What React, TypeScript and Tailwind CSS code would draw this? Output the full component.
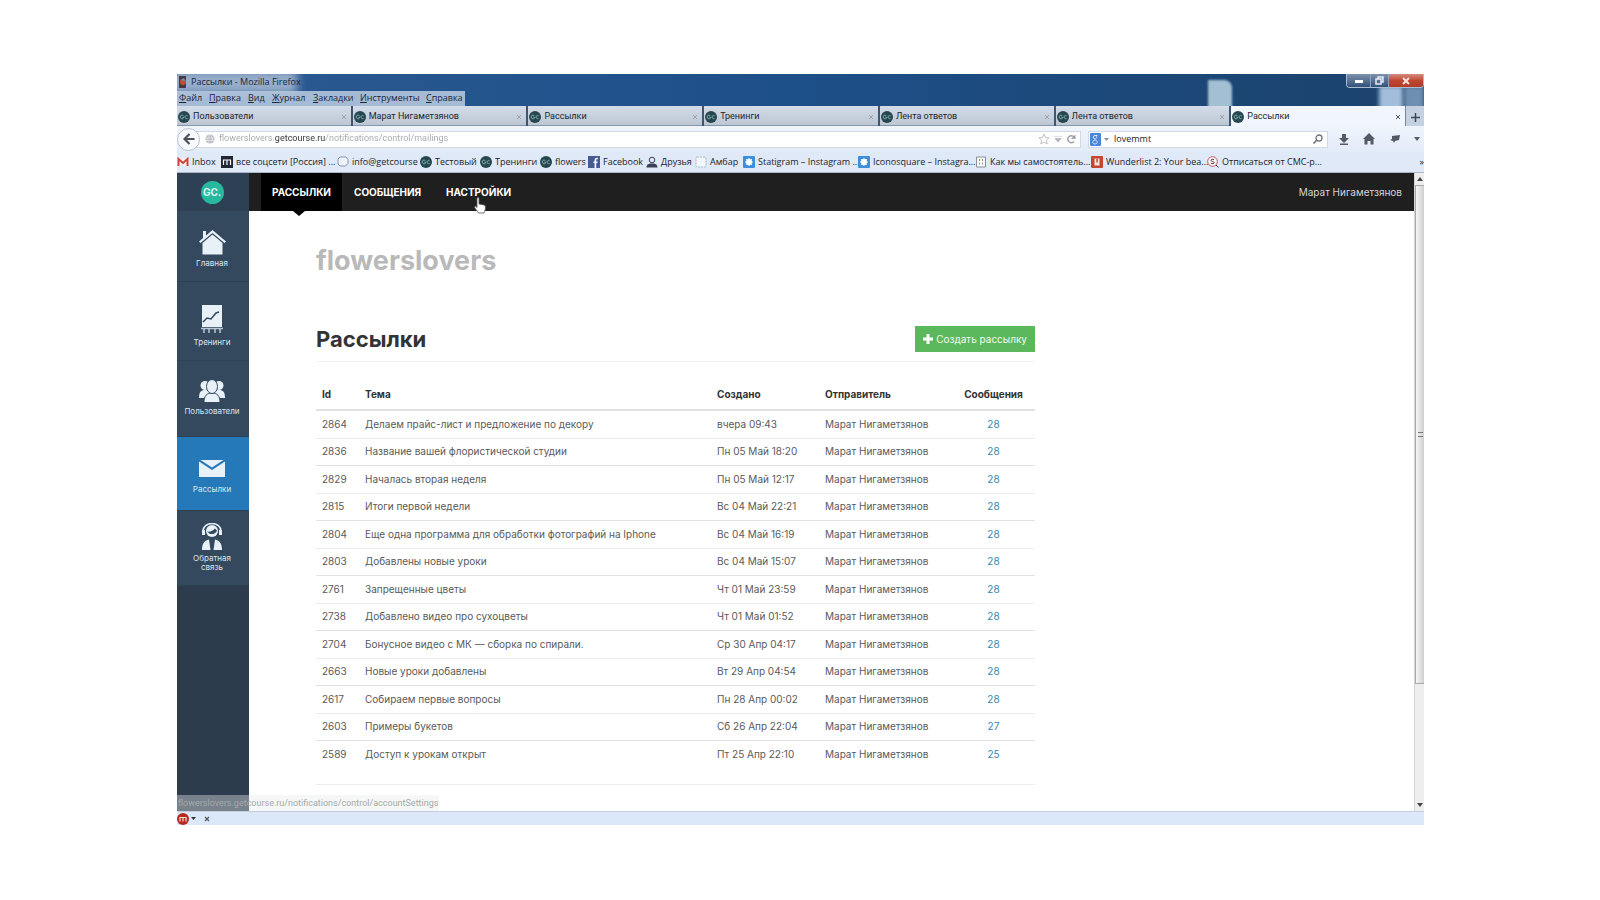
import type { ReactNode } from "react";
import clsx from "clsx";

const menuItems = [
  { label: "Файл", width: "w-[30px]" },
  { label: "Правка", width: "w-[39px]" },
  { label: "Вид", width: "w-6" },
  { label: "Журнал", width: "w-[41px]" },
  { label: "Закладки", width: "w-[47px]" },
  { label: "Инструменты", width: "w-[66px]" },
  { label: "Справка", width: "w-9" },
];

const tabs = [
  "Пользователи",
  "Марат Нигаметзянов",
  "Рассылки",
  "Тренинги",
  "Лента ответов",
  "Лента ответов",
  "Рассылки",
];

const mailings = [
  { id: 2864, subject: "Делаем прайс-лист и предложение по декору", created: "вчера 09:43", count: 28 },
  { id: 2836, subject: "Название вашей флористической студии", created: "Пн 05 Май 18:20", count: 28 },
  { id: 2829, subject: "Началась вторая неделя", created: "Пн 05 Май 12:17", count: 28 },
  { id: 2815, subject: "Итоги первой недели", created: "Вс 04 Май 22:21", count: 28 },
  { id: 2804, subject: "Еще одна программа для обработки фотографий на Iphone", created: "Вс 04 Май 16:19", count: 28 },
  { id: 2803, subject: "Добавлены новые уроки", created: "Вс 04 Май 15:07", count: 28 },
  { id: 2761, subject: "Запрещенные цветы", created: "Чт 01 Май 23:59", count: 28 },
  { id: 2738, subject: "Добавлено видео про сухоцветы", created: "Чт 01 Май 01:52", count: 28 },
  { id: 2704, subject: "Бонусное видео с МК — сборка по спирали.", created: "Ср 30 Апр 04:17", count: 28 },
  { id: 2663, subject: "Новые уроки добавлены", created: "Вт 29 Апр 04:54", count: 28 },
  { id: 2617, subject: "Собираем первые вопросы", created: "Пн 28 Апр 00:02", count: 28 },
  { id: 2603, subject: "Примеры букетов", created: "Сб 26 Апр 22:04", count: 27 },
  { id: 2589, subject: "Доступ к урокам открыт", created: "Пт 25 Апр 22:10", count: 25 },
];

function SiteIcon() {
  return (
    <svg viewBox="0 0 12 12" className="size-3 shrink-0">
      <circle cx="6" cy="6" r="6" fill="#25474f" />
      <path d="M5.4 4.6a1.9 1.9 0 1 0 .1 2.6V6.2H4.4M9.6 4.8a1.6 1.6 0 1 0 0 2.5" fill="none" stroke="#86a9ae" strokeWidth="1" />
    </svg>
  );
}

function SquareIcon() {
  return (
    <svg viewBox="0 0 12 12" className="size-3 shrink-0">
      <rect width="12" height="12" rx="1" fill="#3d8fdc" />
      <path d="M6 2l1.300 1.300L9 3l-.3 1.700L10 6 8.700 7.300 9 9l-1.700-.3L6 10 4.700 8.700 3 9l.3-1.700L2 6l1.300-1.300L3 3l1.700.3z" fill="#fff" />
    </svg>
  );
}

const bookmarks: { label: string; width: string; icon: ReactNode }[] = [
  {
    label: "Inbox",
    width: "w-11",
    icon: (
      <svg viewBox="0 0 12 12" className="size-3 shrink-0">
        <path d="M1 2h10v8H1z" fill="#f4f0f0" />
        <path d="M1.5 10V3L6 7l4.5-4v7" fill="none" stroke="#d0453a" strokeWidth="2" />
      </svg>
    ),
  },
  {
    label: "все соцсети [Россия] ...",
    width: "w-[116px]",
    icon: (
      <svg viewBox="0 0 12 12" className="size-3 shrink-0">
        <rect width="12" height="12" fill="#222733" />
        <path d="M2.5 9V4h7v5M6 4v5" fill="none" stroke="#fff" strokeWidth="1.2" />
      </svg>
    ),
  },
  {
    label: "info@getcourse",
    width: "w-[83px]",
    icon: (
      <svg viewBox="0 0 12 12" className="size-3 shrink-0">
        <path d="M3 1h6l2 2.5v4L8.500 10H3L1 8V3z" fill="#eef3fb" stroke="#8795ae" />
      </svg>
    ),
  },
  { label: "Тестовый", width: "w-[60px]", icon: <SiteIcon /> },
  { label: "Тренинги", width: "w-[60px]", icon: <SiteIcon /> },
  { label: "flowers", width: "w-12", icon: <SiteIcon /> },
  {
    label: "Facebook",
    width: "w-[58px]",
    icon: (
      <svg viewBox="0 0 12 12" className="size-3 shrink-0">
        <rect width="12" height="12" fill="#465a94" />
        <path d="M9.800 2.500H9c-1.200 0-1.600.6-1.600 1.600V12M5.500 6.300h4" fill="none" stroke="#fff" strokeWidth="1.600" />
      </svg>
    ),
  },
  {
    label: "Друзья",
    width: "w-[49px]",
    icon: (
      <svg viewBox="0 0 12 12" className="size-3 shrink-0">
        <circle cx="6" cy="4" r="2.800" fill="#dfe6f2" stroke="#3a4056" />
        <path d="M.5 11.500c0-3 2-3.500 3.500-4h4c1.500.5 3.500 1 3.500 4z" fill="#3a4056" />
      </svg>
    ),
  },
  {
    label: "Амбар",
    width: "w-12",
    icon: (
      <svg viewBox="0 0 12 12" className="size-3 shrink-0">
        <rect x="1" y="1" width="10" height="10" rx="1" fill="#f2f6fc" stroke="#a9b5c8" strokeDasharray="2 1" />
      </svg>
    ),
  },
  { label: "Statigram – Instagram ...", width: "w-[115px]", icon: <SquareIcon /> },
  { label: "Iconosquare – Instagra...", width: "w-[117px]", icon: <SquareIcon /> },
  {
    label: "Как мы самостоятель...",
    width: "w-[116px]",
    icon: (
      <svg viewBox="0 0 12 12" className="size-3 shrink-0">
        <path d="M1.500 1h9v10h-9z" fill="#f6f7f5" stroke="#8a9296" />
        <path d="M4.500 3v6M7.500 3v6" stroke="#8a9c92" strokeDasharray="2 1.500" />
      </svg>
    ),
  },
  {
    label: "Wunderlist 2: Your bea...",
    width: "w-[116px]",
    icon: (
      <svg viewBox="0 0 12 12" className="size-3 shrink-0">
        <rect width="12" height="12" rx="1" fill="#c8452f" />
        <path d="M3.500 2.500h5v7h-5z" fill="#f8e4dc" />
        <path d="M6 2.500v4" stroke="#c8452f" strokeWidth="1.500" />
      </svg>
    ),
  },
  {
    label: "Отписаться от СМС-р...",
    width: "w-[130px]",
    icon: (
      <svg viewBox="0 0 12 12" className="size-3 shrink-0">
        <circle cx="5.500" cy="5.500" r="4.800" fill="#fff" stroke="#c4505a" />
        <path d="M7 3.800c-1-.8-3-.6-3 .6 0 1.400 3.200.8 3.200 2.300 0 1.200-2.300 1.300-3.300.4M9 9l2.500 2.500" fill="none" stroke="#5b2c33" />
      </svg>
    ),
  },
];

const sections = [
  {
    label: "Главная",
    className: "h-[71px] gap-1 pt-[18px]",
    icon: (
      <svg viewBox="0 0 27 26" className="h-[26px] w-[27px]" fill="#e8f1f8">
        <path d="M4 2h3v5l-3 3z" />
        <path d="M13.500 1L0 12.500l1.500 1.600L13.500 4l12 10.100 1.500-1.600z" />
        <path d="M13.500 5.500L3.500 14v11.500h20V14z" />
      </svg>
    ),
  },
  {
    label: "Тренинги",
    className: "h-[79px] gap-1 pt-[23px]",
    icon: (
      <svg viewBox="0 0 22 29" className="h-[29px] w-[22px]">
        <path d="M1 0h20v22H1z" fill="#e8f1f8" />
        <path d="M2 17l4-4 4 1 5-6 3-1" fill="none" stroke="#34495e" strokeWidth="1.500" />
        <path d="M0 23.500h22M3 24v4M8 24v4M14 24v4M19 24v4" stroke="#b9c8d6" strokeWidth="1.500" />
      </svg>
    ),
  },
  {
    label: "Пользователи",
    className: "h-[76px] gap-1 pt-[18px]",
    icon: (
      <svg viewBox="0 0 26 24" className="h-6 w-[26px]" fill="#e8f1f8">
        <circle cx="6" cy="6.500" r="4.500" />
        <circle cx="20" cy="6.500" r="4.500" />
        <path d="M0 19c0-6 2-8 6-8h14c4 0 6 2 6 8z" />
        <path d="M5 23.500c0-7 3-9.500 8-9.500s8 2.500 8 9.500z" stroke="#34495e" />
        <ellipse cx="13" cy="7.500" rx="5.500" ry="7" stroke="#34495e" />
      </svg>
    ),
  },
  {
    label: "Рассылки",
    className: "h-[74px] gap-2 bg-[#2679b8] pt-[23px]",
    icon: (
      <svg viewBox="0 0 26 17" className="h-[17px] w-[26px]" fill="#e8f1f8">
        <path d="M0 1.500l13 8.500 13-8.500V17H0z" />
        <path d="M1.500 0h23L13 7.500z" />
      </svg>
    ),
  },
  {
    label: "Обратная связь",
    className: "h-[75px] gap-1 pt-3",
    icon: (
      <svg viewBox="0 0 22 27" className="h-[27px] w-[22px]">
        <circle cx="11" cy="8" r="6" fill="#e8f1f8" />
        <path d="M2 10V8a9 7.500 0 0 1 18 0v2" fill="none" stroke="#e8f1f8" strokeWidth="1.500" />
        <path d="M1 7h3v5H1zM18 7h3v5h-3z" fill="#e8f1f8" />
        <path d="M6 8.500c3 .5 6-.5 8-3l2 2c-1 3-4 4-7 3.500z" fill="#34495e" />
        <path d="M1 27c0-6 2-9.500 7-10.500L9.500 27zM21 27c0-6-2-9.500-7-10.500L12.500 27z" fill="#e8f1f8" />
      </svg>
    ),
  },
];

function TitleBar() {
  return (
    <header className="relative overflow-hidden bg-linear-to-r from-[#2c5a92] via-[#1d4f88] to-[#1b426c]">
      {/* desktop showing through the glass frame */}
      <div className="absolute inset-0" aria-hidden="true">
        <span className="absolute -top-1 -left-2 h-6 w-32 bg-[#b4c4da]/80 blur-[5px]" />
        <span className="absolute top-1.5 right-[192px] h-8 w-6 rounded-tr-lg bg-[#a3bfd2] blur-[1px]" />
        <span className="absolute top-3 right-[21px] h-8 w-6 bg-[#a3bedb] blur-[2px]" />
        <span className="absolute top-3 right-0 h-8 w-5 bg-[#6f8fb0] blur-[2px]" />
      </div>
      <div className="relative flex h-[17px] items-start justify-between">
        <div className="flex items-center gap-1 pl-0.5 text-[9px] leading-4 text-[#16263c]">
          <svg viewBox="0 0 8 12" className="h-3 w-2">
            <path d="M0 0h7v12H0z" fill="#473a45" />
            <circle cx="4" cy="6" r="3" fill="#c64c2c" />
            <path d="M2 4l3-2 1 3z" fill="#55a0d0" />
          </svg>
          Рассылки - Mozilla Firefox
        </div>
        <div className="flex h-3.5 overflow-hidden rounded-b border border-t-0 border-[#aabdd0]">
          <button aria-label="Свернуть" className="flex w-6 items-end justify-center border-r border-[#91a6bd] bg-linear-to-b from-[#7e93ab] to-[#33527a] pb-1">
            <span className="h-[3px] w-2 bg-white" />
          </button>
          <button aria-label="Восстановить" className="flex w-[18px] items-center justify-center border-r border-[#91a6bd] bg-linear-to-b from-[#7e93ab] to-[#33527a]">
            <svg viewBox="0 0 9 9" className="size-[9px]" fill="none" stroke="#e5edf5" strokeWidth="1.500">
              <path d="M1 3h5v5H1zM3 2.500V1h5v5H6.500" />
            </svg>
          </button>
          <button aria-label="Закрыть" className="flex w-[34px] items-center justify-center bg-linear-to-b from-[#d58c7f] via-[#c04632] to-[#b23a26]">
            <svg viewBox="0 0 8 8" className="size-2">
              <path d="M1 1l6 6M7 1L1 7" stroke="#f5e4e0" strokeWidth="2" />
            </svg>
          </button>
        </div>
      </div>
      <nav className="relative flex h-[15px] w-72 items-start bg-[#b3c5dd]/90 pl-0.5 text-[9px] leading-[14px] text-[#1c2636]">
        {menuItems.map((item) => (
          <button key={item.label} className={clsx("shrink-0 text-left whitespace-nowrap", item.width)}>
            <span className="underline">{item.label[0]}</span>
            {item.label.slice(1)}
          </button>
        ))}
      </nav>
    </header>
  );
}

function TabStrip() {
  return (
    <div className="flex h-5 bg-[#bccbdd] font-['Roboto','Open_Sans',sans-serif] text-[9px] text-[#20262e]">
      {tabs.map((tab, i) => {
        const active = i === tabs.length - 1;
        return (
          <div
            key={i}
            className={clsx(
              "flex min-w-0 flex-1 items-center gap-[3px] border-r pt-0.5 pr-1 pl-px",
              active
                ? "border-[#76879b] bg-[#f1f6fd]"
                : "border-r-2 border-r-[#3f5570] bg-linear-to-b from-[#d3dce8] to-[#bcc6d3] shadow-[inset_0_-1px_#8797aa]"
            )}
          >
            <SiteIcon />
            <button className="flex-1 truncate text-left">{tab}</button>
            <button aria-label="Закрыть вкладку" className={active ? "text-[#4c5460]" : "text-[#9aa5b3]"}>
              <svg viewBox="0 0 6 6" className="size-1.5">
                <path d="M1 1l4 4M5 1L1 5" stroke="currentColor" />
              </svg>
            </button>
          </div>
        );
      })}
      <button aria-label="Новая вкладка" className="flex w-[18px] items-center justify-center bg-[#c5d1e0] pt-0.5">
        <svg viewBox="0 0 9 9" className="size-[9px]">
          <path d="M4.500 0v9M0 4.500h9" stroke="#3c4654" strokeWidth="1.500" />
        </svg>
      </button>
    </div>
  );
}

function Toolbar() {
  return (
    <div className="flex h-[26px] items-center bg-linear-to-b from-[#f0f5fc] to-[#e2ebf8]">
      <button aria-label="Назад" className="relative z-10 flex size-[23px] shrink-0 items-center justify-center rounded-full border border-[#b8c3d1] bg-[#f8fafd]">
        <svg viewBox="0 0 12 12" className="size-3">
          <path d="M6.500 1L1.500 6l5 5M2 6h9.500" fill="none" stroke="#4a525e" strokeWidth="2.200" />
        </svg>
      </button>
      <div className="-ml-1 flex h-[17px] flex-1 items-center gap-1 border border-[#d0d9e5] bg-white pr-1 pl-2">
        <svg viewBox="0 0 10 10" className="size-2.5 shrink-0">
          <circle cx="5" cy="5" r="4.500" fill="#b7babf" />
          <path d="M1 4h8M1 6.500h8M5 .5c-3 3-3 6 0 9M5 .5c3 3 3 6 0 9" fill="none" stroke="#f0f1f3" strokeWidth=".7" />
        </svg>
        <input
          aria-label="Адрес"
          defaultValue="flowerslovers.getcourse.ru/notifications/control/mailings"
          className="min-w-0 flex-1 bg-[linear-gradient(90deg,#a4a7ab_55px,#2f3338_55px,#2f3338_106px,#a4a7ab_106px)] bg-clip-text font-['Roboto','Open_Sans',sans-serif] text-[9px] text-transparent outline-none"
        />
        <button aria-label="В закладки">
          <svg viewBox="0 0 12 12" className="size-3">
            <path d="M6 1l1.500 3.500 3.500.3-2.700 2.400.9 3.800L6 9l-3.200 2 .9-3.800L1 4.800l3.500-.3z" fill="none" stroke="#bdc1c6" />
          </svg>
        </button>
        <button aria-label="История">
          <svg viewBox="0 0 8 6" className="h-1.5 w-2">
            <path d="M0 0h8M1 2.500h6L4 6z" fill="#b2b6bb" stroke="#b2b6bb" strokeWidth=".8" />
          </svg>
        </button>
        <button aria-label="Обновить">
          <svg viewBox="0 0 10 10" className="size-2.5">
            <path d="M8 7.500A3.500 3.500 0 1 1 8 3" fill="none" stroke="#9da1a7" strokeWidth="1.500" />
            <path d="M9.500.5V5H5z" fill="#9da1a7" />
          </svg>
        </button>
      </div>
      <div className="ml-[7px] flex h-[17px] w-60 items-center border border-[#d0d9e5] bg-white pr-1 pl-px">
        <svg viewBox="0 0 11 13" className="h-[13px] w-[11px]">
          <rect width="11" height="13" rx="1" fill="#4a86dc" />
          <path d="M7.500 2.500H5a1.500 1.500 0 0 0 0 3.500c2 0 2-3.500 0-3.500M5 7c3 0 3 4 0 4s-3-3.500 0-4z" fill="none" stroke="#d8e7fb" />
        </svg>
        <svg viewBox="0 0 5 3" className="mx-[3px] h-[3px] w-[5px]">
          <path d="M0 0h5L2.500 3z" fill="#8b9097" />
        </svg>
        <input aria-label="Поиск" defaultValue="lovemmt" className="ml-0.5 min-w-0 flex-1 text-[9px] text-[#22262c] outline-none" />
        <button aria-label="Найти">
          <svg viewBox="0 0 10 10" className="size-2.5">
            <circle cx="6" cy="4" r="3" fill="none" stroke="#6f747b" strokeWidth="1.300" />
            <path d="M4 6L.5 9.500" stroke="#6f747b" strokeWidth="1.600" />
          </svg>
        </button>
      </div>
      <div className="flex w-24 items-center justify-between pr-1 pl-2.5 text-[#525a66]">
        <button aria-label="Загрузки">
          <svg viewBox="0 0 12 12" className="size-3" fill="currentColor">
            <path d="M4 1h4v4h3l-5 5-5-5h3zM2 10.500h8V12H2z" />
          </svg>
        </button>
        <button aria-label="Домой">
          <svg viewBox="0 0 12 12" className="size-3" fill="currentColor">
            <path d="M6 0l6 6h-1.500v5.500h-3V8h-3v3.500h-3V6H0z" />
          </svg>
        </button>
        <button aria-label="Дополнение">
          <svg viewBox="0 0 12 12" className="size-3" fill="currentColor">
            <path d="M3 3l8-1-1 5-4 1-1 2-1-2-3-1 2-1z" />
          </svg>
        </button>
        <button aria-label="Ещё">
          <svg viewBox="0 0 6 4" className="h-1 w-1.5" fill="currentColor">
            <path d="M0 0h6L3 4z" />
          </svg>
        </button>
      </div>
    </div>
  );
}

function BookmarksBar() {
  return (
    <div className="flex h-[21px] items-center border-b border-[#a9b7c9] bg-[#dfe9f7] text-[9px] text-[#1d222a]">
      {bookmarks.map((item) => (
        <a key={item.label} href="#" className={clsx("flex shrink-0 items-center gap-[3px] whitespace-nowrap", item.width)}>
          {item.icon}
          {item.label}
        </a>
      ))}
      <button aria-label="Показать другие закладки" className="ml-auto">
        »
      </button>
    </div>
  );
}

function Sidebar() {
  return (
    <aside className="flex w-[72px] shrink-0 flex-col bg-[#2c3c4d]">
      <a href="#" className="flex h-[38px] items-center justify-center bg-[#2e4054] pr-0.5">
        <span className="flex size-[23px] items-center justify-center rounded-full bg-[#27b99f] text-[10px] font-bold text-[#dff5f0]">
          GC.
        </span>
      </a>
      {sections.map((section) => (
        <a
          key={section.label}
          href="#"
          className={clsx(
            "flex flex-col items-center border-b border-[#2d4155] pr-0.5 text-center text-[8px] leading-[9px] text-[#dbe5ee]",
            section.className,
            section.label !== "Рассылки" && "bg-[#34495e]"
          )}
        >
          {section.icon}
          <span className={section.label === "Обратная связь" ? "w-12" : "whitespace-nowrap"}>{section.label}</span>
        </a>
      ))}
    </aside>
  );
}

function TopNav() {
  return (
    <nav className="flex h-[38px] items-center bg-[#1f1f1f] pl-3 text-[10px] font-bold text-white">
      <a href="#" className="relative flex h-full w-[81px] items-center justify-center bg-black">
        РАССЫЛКИ
        <span className="absolute top-full left-8 border-x-[6px] border-t-[5px] border-x-transparent border-t-black" />
      </a>
      <a href="#" className="w-[92px] pl-3">
        СООБЩЕНИЯ
      </a>
      <a href="#" className="relative pl-3">
        НАСТРОЙКИ
        <svg viewBox="0 0 12 17" className="absolute top-3 left-10 h-[17px] w-3">
          <path
            d="M3 1.500c0-1.300 2-1.300 2 0V7l5 1c1 .3 1.500 1 1.500 2 0 2-.5 3.500-1.500 6H4.500C3 13.500 1.500 12 .7 10.500c-.5-1 .8-1.800 1.600-.8l.7.8z"
            fill="#fff"
            stroke="#555"
            strokeWidth=".8"
          />
        </svg>
      </a>
      <a href="#" className="mr-3 ml-auto text-[10px] font-normal text-[#d4d4d4]">
        Марат Нигаметзянов
      </a>
    </nav>
  );
}

function MailingsTable() {
  return (
    <table className="w-full table-fixed text-left text-[10px] text-[#5a5a5a]">
      <colgroup>
        <col className="w-[43px]" />
        <col />
        <col className="w-[108px]" />
        <col className="w-[133px]" />
        <col className="w-[83px]" />
      </colgroup>
      <thead>
        <tr className="h-[30px] border-b-2 border-[#e0e0e0] text-[#333]">
          <th className="px-1.5">Id</th>
          <th className="px-1.5">Тема</th>
          <th className="px-1.5">Создано</th>
          <th className="px-1.5">Отправитель</th>
          <th className="text-center">Сообщения</th>
        </tr>
      </thead>
      <tbody>
        {mailings.map((row) => (
          <tr key={row.id} className="h-7 border-b border-[#ededed] last:border-b-0 even:h-[27px] even:border-[#e2e2e2]">
            <td className="px-1.5">{row.id}</td>
            <td className="px-1.5">{row.subject}</td>
            <td className="px-1.5">{row.created}</td>
            <td className="px-1.5">Марат Нигаметзянов</td>
            <td className="text-center">
              <a href="#" className="text-[#3a87ad]">
                {row.count}
              </a>
            </td>
          </tr>
        ))}
      </tbody>
    </table>
  );
}

function Scrollbar() {
  return (
    <div className="flex w-2.5 shrink-0 flex-col items-center border-l border-[#d5d5d5] bg-[#eeeeee]" aria-hidden="true">
      <svg viewBox="0 0 6 4" className="my-1 h-1 w-1.5">
        <path d="M0 4h6L3 0z" fill="#444" />
      </svg>
      <div className="flex h-[499px] w-full items-center justify-center border border-r-0 border-[#a9a9a9] bg-linear-to-r from-[#f6f6f6] to-[#cfcfcf]">
        <span className="h-[5px] w-[5px] border-y border-[#777]" />
      </div>
      <svg viewBox="0 0 6 4" className="mt-auto mb-1 h-1 w-1.5">
        <path d="M0 0h6L3 4z" fill="#444" />
      </svg>
    </div>
  );
}

export default function App() {
  return (
    <div className="min-h-screen bg-white px-[176px] pt-[74px] font-['Open_Sans','Noto_Sans',sans-serif]">
      <div className="ml-px">
        <TitleBar />
        <TabStrip />
        <Toolbar />
        <BookmarksBar />
        <div className="relative flex font-['Inter','Open_Sans',sans-serif]">
          <Sidebar />
          <div className="min-w-0 flex-1">
            <TopNav />
            <main className="w-[786px] max-w-full pt-8 pb-[26px] pl-[67px]">
              <h1 className="text-[27px] leading-9 font-bold text-[#b9b9b9]">flowerslovers</h1>
              <div className="mt-11 flex items-center justify-between border-b border-[#f0f0f0] pb-1.5">
                <h2 className="text-[22px] leading-8 font-bold text-[#333]">Рассылки</h2>
                <button className="flex h-[26px] items-center gap-[3px] bg-[#5cb85c] px-2 text-[10px] text-[#f0faf0]">
                  <svg viewBox="0 0 10 10" className="size-2.5">
                    <path d="M5 0v10M0 5h10" stroke="#fff" strokeWidth="3" />
                  </svg>
                  Создать рассылку
                </button>
              </div>
              <div className="border-b border-[#eeeeee] pt-[18px] pb-4">
                <MailingsTable />
              </div>
            </main>
          </div>
          <Scrollbar />
          <div className="absolute bottom-0 left-0 h-4 w-[262px] bg-[#e9eaec]/40 pl-px font-['Roboto','Open_Sans',sans-serif] text-[9px] leading-4 whitespace-nowrap text-[#a5a8ab]">
            flowerslovers.getcourse.ru/notifications/control/accountSettings
          </div>
        </div>
        <footer className="flex h-3.5 items-center border-t border-[#c3cddb] bg-[#dbe8f9]">
          <button aria-label="Дополнение" className="flex items-center gap-0.5">
            <svg viewBox="0 0 12 12" className="size-3">
              <circle cx="6" cy="6" r="6" fill="#b8291f" />
              <path d="M3 8.500V4.500h6v4M6 4.500v4" fill="none" stroke="#f6dcd6" strokeWidth="1.200" />
            </svg>
            <svg viewBox="0 0 5 3" className="h-[3px] w-[5px]">
              <path d="M0 0h5L2.500 3z" fill="#333" />
            </svg>
          </button>
          <button aria-label="Закрыть панель" className="ml-2">
            <svg viewBox="0 0 6 6" className="size-1.5">
              <path d="M1 1l4 4M5 1L1 5" stroke="#555" strokeWidth="1.200" />
            </svg>
          </button>
        </footer>
      </div>
    </div>
  );
}
